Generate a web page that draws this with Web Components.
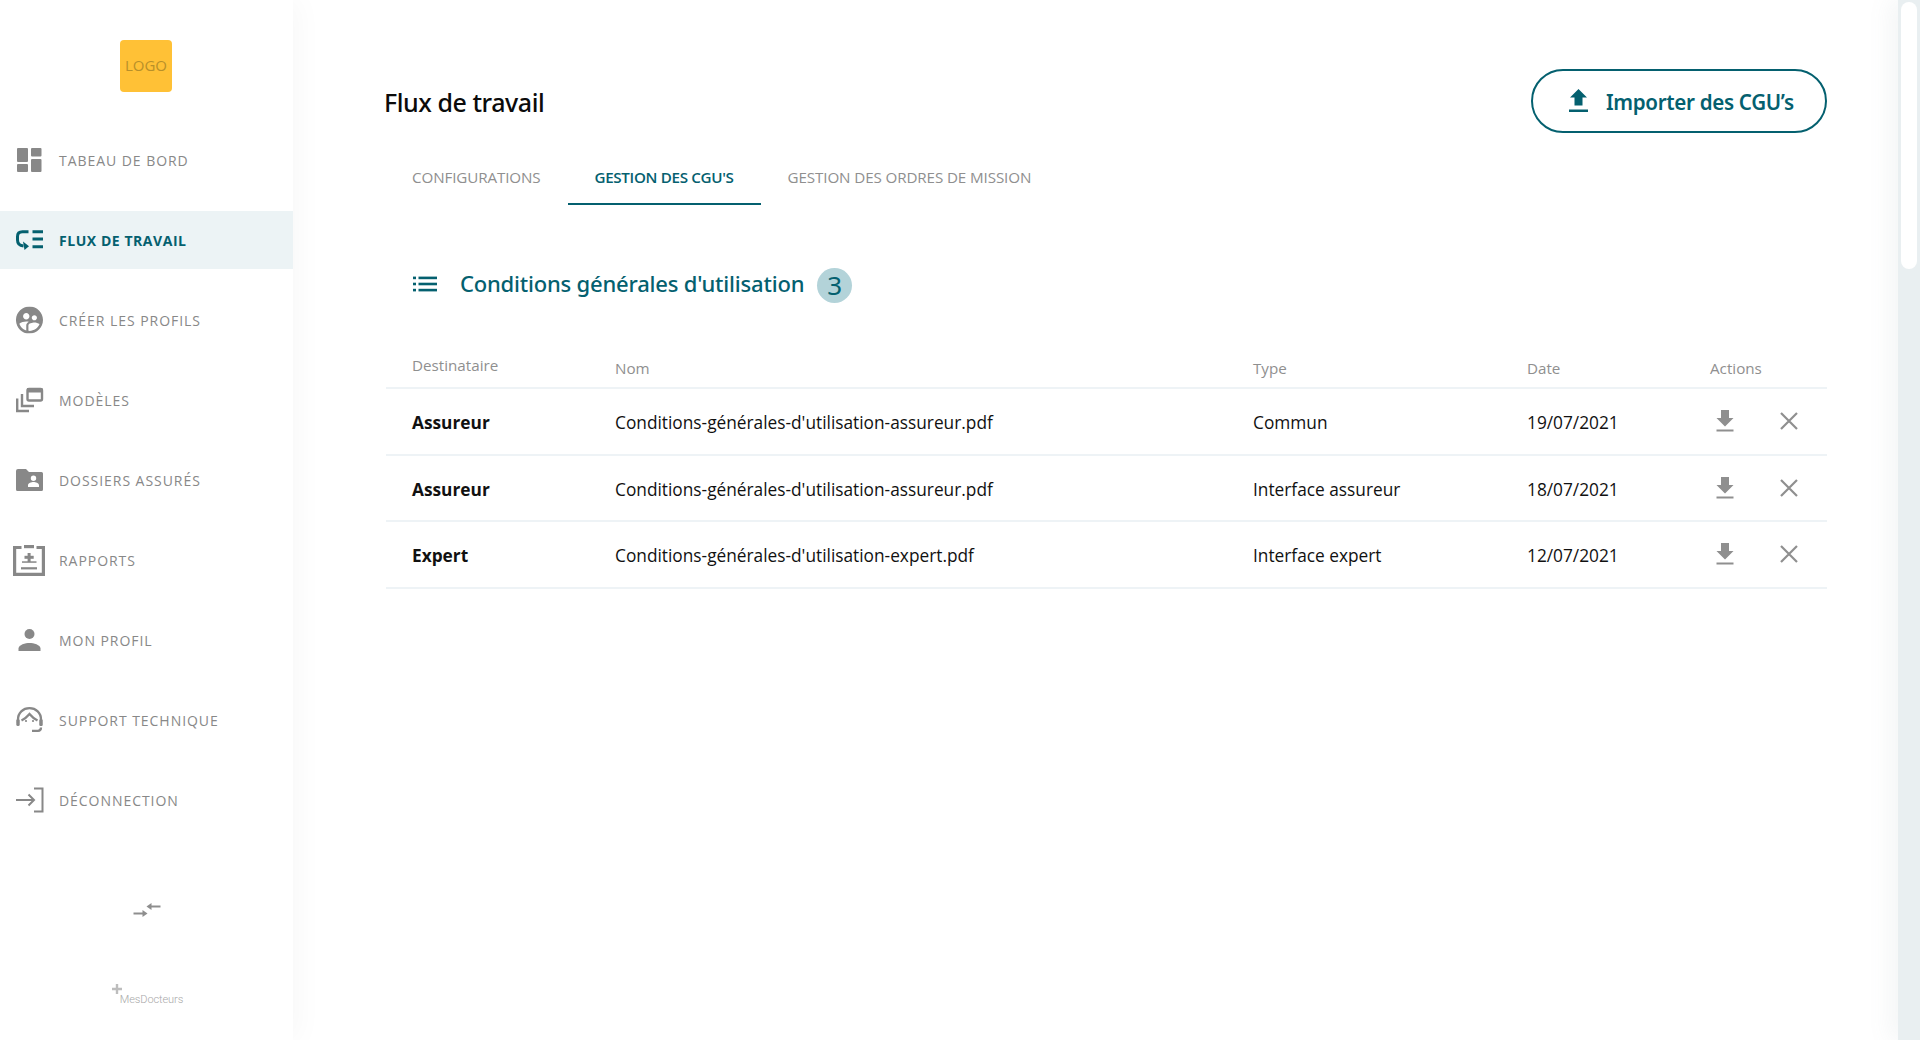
<!DOCTYPE html>
<html lang="fr">
<head>
<meta charset="utf-8">
<title>Flux de travail</title>
<style>
  html, body { margin: 0; height: 100%; background: #fff; overflow: hidden; }
  body { font-family: "Open Sans", "Noto Sans", sans-serif; }
</style>
</head>
<body>
<app-shell>
  <app-sidebar slot="side">
    <nav-item icon="dashboard">TABEAU DE BORD</nav-item>
    <nav-item icon="flow" active>FLUX DE TRAVAIL</nav-item>
    <nav-item icon="users">CRÉER LES PROFILS</nav-item>
    <nav-item icon="models">MODÈLES</nav-item>
    <nav-item icon="folder">DOSSIERS ASSURÉS</nav-item>
    <nav-item icon="report">RAPPORTS</nav-item>
    <nav-item icon="person">MON PROFIL</nav-item>
    <nav-item icon="support">SUPPORT TECHNIQUE</nav-item>
    <nav-item icon="logout">DÉCONNECTION</nav-item>
  </app-sidebar>

  <page-header title="Flux de travail">
    <import-button>Importer des CGU’s</import-button>
  </page-header>

  <tab-bar>
    <tab-item>CONFIGURATIONS</tab-item>
    <tab-item active>GESTION DES CGU'S</tab-item>
    <tab-item>GESTION DES ORDRES DE MISSION</tab-item>
  </tab-bar>

  <section-title count="3">Conditions générales d'utilisation</section-title>

  <cgu-table>
    <cgu-row to="Assureur" name="Conditions-générales-d'utilisation-assureur.pdf" type="Commun" date="19/07/2021"></cgu-row>
    <cgu-row to="Assureur" name="Conditions-générales-d'utilisation-assureur.pdf" type="Interface assureur" date="18/07/2021"></cgu-row>
    <cgu-row to="Expert" name="Conditions-générales-d'utilisation-expert.pdf" type="Interface expert" date="12/07/2021"></cgu-row>
  </cgu-table>
</app-shell>

<script>
  const ICONS = {
    dashboard: `<g fill="currentColor"><rect x="4" y="4" width="11" height="14" rx="1"/><rect x="4" y="20" width="11" height="8" rx="1"/><rect x="18" y="4" width="10.5" height="8.5" rx="1"/><rect x="18" y="15" width="10.5" height="13" rx="1"/></g>`,
    flow: `<g fill="none" stroke="currentColor" stroke-width="3"><path d="M15.500 7.700H9.500Q4.500 7.700 4.500 12.500V16Q4.500 21.500 10.500 22"/><path d="M19.500 7.700H30M19.500 15H30M19.500 22.700H30"/></g><path fill="currentColor" d="M10 17.500l6 4.700-4.500 3.800z"/>`,
    users: `<svg x="3" y="2.6" width="27" height="27" viewBox="2 2 20 20"><path fill="currentColor" d="M11.99 2c-5.52 0-10 4.48-10 10s4.48 10 10 10 10-4.48 10-10-4.48-10-10-10zm3.61 6.34c1.07 0 1.93.86 1.93 1.93 0 1.07-.86 1.93-1.93 1.93-1.07 0-1.93-.86-1.93-1.93-.01-1.07.86-1.93 1.93-1.93zm-6-1.58c1.3 0 2.36 1.06 2.36 2.36 0 1.3-1.06 2.36-2.36 2.36s-2.36-1.06-2.36-2.36c0-1.31 1.05-2.36 2.36-2.36zm0 9.13v3.75c-2.4-.75-4.3-2.6-5.14-4.96 1.05-1.12 3.67-1.69 5.14-1.69.53 0 1.2.08 1.9.22-1.64.87-1.9 2.02-1.9 2.68zM11.99 20c-.27 0-.53-.01-.79-.04v-4.07c0-1.42 2.94-2.13 4.4-2.13 1.07 0 2.92.39 3.84 1.15-1.17 2.97-4.06 5.09-7.45 5.09z"/></svg>`,
    models: `<g fill="none" stroke="currentColor" stroke-width="2.4"><path d="M4.200 14.500V27H16"/><path d="M9 10V22H21"/><rect x="14.500" y="5" width="14.500" height="11.500" rx="1.500"/></g><rect x="14" y="4" width="15.500" height="4.500" fill="currentColor"/>`,
    folder: `<path fill="currentColor" fill-rule="evenodd" d="M5 5h8l3 3h12.500a1.500 1.500 0 0 1 1.500 1.500v16a1.500 1.500 0 0 1-1.500 1.500H4.500A1.500 1.500 0 0 1 3 25.500V7a2 2 0 0 1 2-2zM20.500 11.500a2.700 2.700 0 1 0 0 5.400 2.700 2.700 0 0 0 0-5.400zM15 23h11v-1.700c0-2-3.500-3.200-5.500-3.200s-5.500 1.200-5.500 3.200z"/>`,
    report: `<g fill="none" stroke="currentColor" stroke-width="3.200"><path d="M8.500 3.500H1.600V30.400H30.400V3.500H23.500"/></g><g fill="currentColor"><rect x="11" y="1" width="10" height="3.200"/><rect x="14.600" y="9" width="3" height="9"/><rect x="11.500" y="11.800" width="9.200" height="3"/><rect x="9" y="17.300" width="14.500" height="1.500"/><rect x="8" y="23.200" width="16" height="2.200"/></g>`,
    person: `<g fill="currentColor"><circle cx="16.500" cy="10" r="5"/><path d="M5.500 27v-2.500c0-3.700 7-5.500 11-5.500s11 1.800 11 5.500V27z"/></g>`,
    support: `<g fill="none" stroke="currentColor" stroke-width="2.300"><path d="M5 19V15.500C5 8.800 10 4.200 16.500 4.200S28 8.800 28 15.500V22"/><path d="M8.500 16.500C11.500 15 14 13 16.500 10 19 13 21.500 15 24.500 16.500"/><path d="M28 23.500c0 2.500-1.500 3.300-3 3.300h-6"/></g><g fill="currentColor"><rect x="3.300" y="15" width="3.400" height="7" rx="1.500"/><rect x="26.300" y="15" width="3.400" height="7" rx="1.500"/><circle cx="13" cy="17" r="1.100"/><circle cx="20" cy="17" r="1.100"/></g>`,
    logout: `<g fill="none" stroke="currentColor" stroke-width="2"><path d="M3 16H21M15.500 10.500L21 16L15.500 21.500"/><path d="M21 4.500H29.500V27.500H21"/></g>`
  };

  const svg = (w, h, vb, body) =>
    `<svg width="${w}" height="${h}" viewBox="${vb}" aria-hidden="true">${body}</svg>`;

  class AppShell extends HTMLElement {
    constructor() {
      super();
      this.attachShadow({ mode: "open" }).innerHTML = `
      <style>
        :host { display: flex; height: 100vh; background: #fff; }
        main { flex: 1; min-width: 0; padding: 69px 71px 0 91px; background: #fff; }
        .track { flex: none; width: 22px; background: #e9eff1; box-shadow: -6px 0 24px rgba(120,140,150,.10); padding: 2px 3px; box-sizing: border-box; position: relative; }
        .thumb { height: 267px; background: #fff; border-radius: 8px; }
      </style>
      <slot name="side"></slot>
      <main><slot></slot></main>
      <div class="track"><div class="thumb"></div></div>`;
    }
  }

  class AppSidebar extends HTMLElement {
    constructor() {
      super();
      this.attachShadow({ mode: "open" }).innerHTML = `
      <style>
        :host { display: flex; flex-direction: column; flex: none; width: 293px; height: 100vh; background: #fff; box-shadow: 6px 0 26px rgba(0,0,0,.03); position: relative; z-index: 1; box-sizing: border-box; padding-top: 40px; }
        .logo { align-self: center; margin-left: -1px; width: 52px; height: 52px; border-radius: 4px; background: #ffc136; color: #b8902a; font-size: 15px; line-height: 51px; text-align: center; margin-bottom: 39px; }
        .list { display: flex; flex-direction: column; gap: 22px; }
        .collapse { align-self: center; margin-top: 72px; height: 18px; color: #8e8e8e; }
        .brand { align-self: center; margin: 65px 0 0 0; display: flex; color: #bdbdbd; }
        .brand svg { margin-left: 2px; }
        .brand span { font: 300 11px/1 "Roboto", sans-serif; letter-spacing: -.1px; margin: 10px 0 0 -2px; color: #a8a8a8; }
        svg { display: block; }
      </style>
      <div class="logo">LOGO</div>
      <div class="list"><slot></slot></div>
      <div class="collapse">${svg(28, 18, "0 0 28 18", `<g fill="currentColor"><path d="M27.500 4.500V6.500H17V4.500z"/><path d="M13.500 5.500l5-3.500v7z"/><path d="M.5 11.500V13.500H11V11.500z"/><path d="M14.500 12.500l-5-3.500v7z"/></g>`)}</div>
      <div class="brand">${svg(10, 10, "0 0 10 10", `<path fill="currentColor" d="M3.800 0h2.400v3.800H10v2.400H6.200V10H3.800V6.200H0V3.800h3.800z"/>`)}<span>MesDocteurs</span></div>`;
    }
  }

  class NavItem extends HTMLElement {
    constructor() {
      super();
      this.attachShadow({ mode: "open" }).innerHTML = `
      <style>
        :host { display: flex; align-items: center; gap: 14px; height: 58px; padding-left: 13px; color: #888; font-size: 14px; font-weight: 500; letter-spacing: .95px; }
        :host([active]) { background: #ecf3f5; color: #04606f; font-weight: 700; letter-spacing: .55px; }
        svg { display: block; flex: none; }
      </style>
      <span id="i"></span><slot></slot>`;
    }
    connectedCallback() {
      const body = ICONS[this.getAttribute("icon")] || "";
      this.shadowRoot.getElementById("i").innerHTML = svg(32, 32, "0 0 32 32", body);
    }
  }

  class PageHeader extends HTMLElement {
    constructor() {
      super();
      this.attachShadow({ mode: "open" }).innerHTML = `
      <style>
        :host { display: flex; align-items: center; justify-content: space-between; height: 64px; }
        h1 { margin: 2px 0 0; font: 500 25px/1 "Noto Sans", sans-serif; color: #0b0b0b; letter-spacing: -.45px; }
      </style>
      <h1></h1><slot></slot>`;
    }
    connectedCallback() {
      this.shadowRoot.querySelector("h1").textContent = this.getAttribute("title");
    }
  }

  class ImportButton extends HTMLElement {
    constructor() {
      super();
      this.attachShadow({ mode: "open" }).innerHTML = `
      <style>
        :host { display: flex; align-items: center; gap: 18px; box-sizing: border-box; width: 296px; height: 64px; padding-left: 36px; border: 2.500px solid #04606f; border-radius: 32px; color: #04606f; font: 600 20.600px/1 "Noto Sans", sans-serif; letter-spacing: -.33px; }
        svg { display: block; flex: none; margin-top: -1px; }
        span { margin-top: 3px; }
      </style>
      ${svg(19, 23, "0 0 19 23", `<path fill="#04606f" d="M9.500 0L18 8.500H13.500V16.500H5.500V8.500H1zM0 20.500H19V23H0z"/>`)}
      <span><slot></slot></span>`;
    }
  }

  class TabBar extends HTMLElement {
    constructor() {
      super();
      this.attachShadow({ mode: "open" }).innerHTML = `
      <style>:host { display: flex; margin: 18px 0 0 1px; }</style><slot></slot>`;
    }
  }

  class TabItem extends HTMLElement {
    constructor() {
      super();
      this.attachShadow({ mode: "open" }).innerHTML = `
      <style>
        :host { display: flex; align-items: center; box-sizing: border-box; height: 54px; padding: 0 27px; border-bottom: 2.500px solid transparent; color: #8f8f8f; font-size: 15.200px; font-weight: 400; letter-spacing: -.12px; }
        :host([active]) { color: #04606f; font-weight: 600; letter-spacing: -.33px; border-bottom-color: #04606f; }
      </style>
      <slot></slot>`;
    }
  }

  class SectionTitle extends HTMLElement {
    constructor() {
      super();
      this.attachShadow({ mode: "open" }).innerHTML = `
      <style>
        :host { display: flex; align-items: center; height: 34px; margin-top: 63px; padding-left: 29px; color: #04606f; }
        svg { display: block; flex: none; margin: -3px 23px 0 0; }
        .text { font: 500 22px/1 "Noto Sans", sans-serif; letter-spacing: -.2px; margin-top: -5px; }
        .badge { margin-left: 13px; width: 35px; height: 35px; border-radius: 50%; background: #b3d3d9; font: 400 26px/34px "Noto Sans", sans-serif; text-align: center; }
      </style>
      ${svg(24, 16, "0 0 24 16", `<g fill="#04606f"><rect width="3" height="2.600" y=".6"/><rect x="5.500" y=".6" width="18.500" height="2.600"/><rect y="6.700" width="3" height="2.600"/><rect x="5.500" y="6.700" width="18.500" height="2.600"/><rect y="12.800" width="3" height="2.600"/><rect x="5.500" y="12.800" width="18.500" height="2.600"/></g>`)}
      <span class="text"><slot></slot></span><span class="badge"></span>`;
    }
    connectedCallback() {
      this.shadowRoot.querySelector(".badge").textContent = this.getAttribute("count");
    }
  }

  class CguTable extends HTMLElement {
    constructor() {
      super();
      this.attachShadow({ mode: "open" }).innerHTML = `
      <style>
        :host { display: block; margin: 38px 0 0 2px; --cols: 203px 638px 274px 183px 1fr; }
        .head { display: grid; grid-template-columns: var(--cols); box-sizing: border-box; height: 49px; padding-left: 26px; border-bottom: 2px solid #eef3f6; color: #8f8f8f; font-size: 15.200px; }
        .head span { padding-top: 16px; line-height: 24px; }
        .head span:first-child { padding-top: 13px; }
      </style>
      <div class="head"><span>Destinataire</span><span>Nom</span><span>Type</span><span>Date</span><span>Actions</span></div>
      <slot></slot>`;
    }
  }

  class CguRow extends HTMLElement {
    constructor() {
      super();
      this.attachShadow({ mode: "open" }).innerHTML = `
      <style>
        :host { display: grid; grid-template-columns: var(--cols); align-items: center; box-sizing: border-box; height: 66.700px; padding-left: 26px; border-bottom: 2px solid #eef3f6; color: #111; font-size: 17.300px; }
        .to, .name, .type, .date { padding-top: 2px; }
        .to { font-weight: 700; }
        .acts { display: flex; align-items: center; color: #8f8f8f; padding-left: 6px; margin-top: -1px; }
        svg { display: block; flex: none; }
        .x { margin-left: 46px; }
      </style>
      <span class="to"></span><span class="name"></span><span class="type"></span><span class="date"></span>
      <span class="acts">
        ${svg(18, 22, "0 0 18 22", `<path fill="currentColor" d="M5 0H13V8H17.500L9 16.500 .5 8H5zM.5 19.500H17.500V21.500H.5z"/>`)}
        <span class="x">${svg(18, 18, "0 0 18 18", `<path fill="none" stroke="currentColor" stroke-width="2.200" d="M1 1L17 17M17 1L1 17"/>`)}</span>
      </span>`;
    }
    connectedCallback() {
      for (const key of ["to", "name", "type", "date"]) {
        this.shadowRoot.querySelector("." + key).textContent = this.getAttribute(key);
      }
    }
  }

  customElements.define("app-shell", AppShell);
  customElements.define("app-sidebar", AppSidebar);
  customElements.define("nav-item", NavItem);
  customElements.define("page-header", PageHeader);
  customElements.define("import-button", ImportButton);
  customElements.define("tab-bar", TabBar);
  customElements.define("tab-item", TabItem);
  customElements.define("section-title", SectionTitle);
  customElements.define("cgu-table", CguTable);
  customElements.define("cgu-row", CguRow);
</script>
</body>
</html>
